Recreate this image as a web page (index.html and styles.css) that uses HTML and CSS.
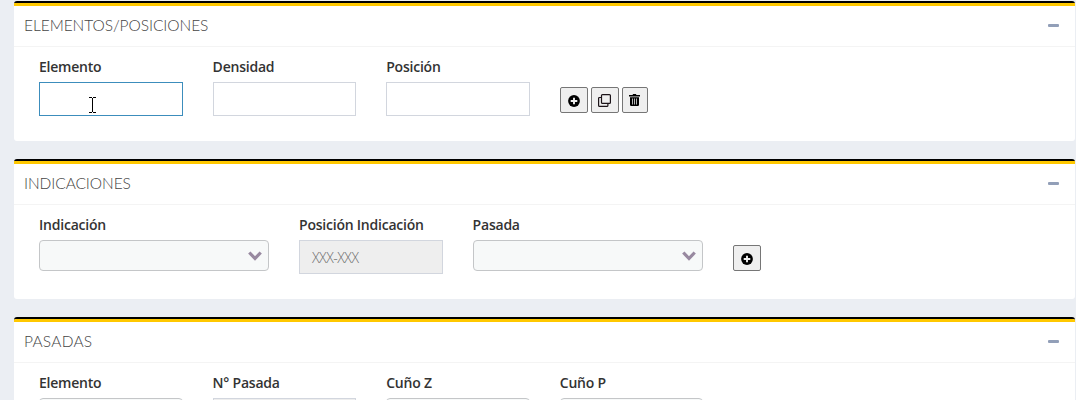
FILE: index.html
```html
<!DOCTYPE html>
<html lang="es">
<head>
<meta charset="utf-8">
<title>Elementos</title>
<link rel="stylesheet" href="styles.css">
</head>
<body>
<svg class="defs" aria-hidden="true">
  <symbol id="plus" viewBox="0 0 12 12"><circle cx="6" cy="6" r="5.9"/><path d="M6 2.7v6.6M2.7 6h6.6" fill="none" stroke="#efefef" stroke-width="1.9"/></symbol>
  <symbol id="chevron" viewBox="0 0 14 10"><path d="M1.300 1.500L7 7.500l5.700-6" fill="none" stroke="#9889a0" stroke-width="3.200"/></symbol>
</svg>
<main class="page">
  <section class="box">
    <header class="box-head"><h3 class="title title-elements">ELEMENTOS/POSICIONES</h3><span class="collapse"></span></header>
    <div class="row">
      <div class="field"><label class="label">Elemento</label><div class="input focused"></div></div>
      <div class="field"><label class="label">Densidad</label><div class="input"></div></div>
      <div class="field"><label class="label">Posición</label><div class="input"></div></div>
      <div class="actions">
        <button class="btn"><svg class="icon"><use href="#plus"/></svg></button>
        <button class="btn"><svg class="icon-copy" viewBox="0 0 13 13"><path d="M4.500.6h6.900q1 0 1 1v6.800q0 1-1 1H4.500q-1 0-1-1V1.600q0-1 1-1zM3.300 3.500H1.600q-1 0-1 1v6.900q0 1 1 1h7.300q1 0 1-1V9.500" fill="none" stroke="#1b1318" stroke-width="1.200"/></svg></button>
        <button class="btn btn-trash"><svg class="icon-trash" viewBox="0 0 11 12"><path d="M0 1h3.500l.6-1h2.800l.6 1H11v1.500H0zM1 3.300h9v7.500q0 1.200-1.200 1.200H2.200Q1 12 1 10.800z"/><path d="M3.500 4.500v6M5.500 4.500v6M7.500 4.500v6" stroke="#c9c9c9" stroke-width=".9"/></svg></button>
      </div>
    </div>
  </section>
  <section class="box">
    <header class="box-head"><h3 class="title title-indications">INDICACIONES</h3><span class="collapse"></span></header>
    <div class="row">
      <div class="field wide"><label class="label">Indicación</label><div class="select"><svg class="chevron"><use href="#chevron"/></svg></div></div>
      <div class="field"><label class="label">Posición Indicación</label><div class="input disabled"><span class="placeholder">XXX-XXX</span></div></div>
      <div class="field wide"><label class="label">Pasada</label><div class="select"><svg class="chevron"><use href="#chevron"/></svg></div></div>
      <div class="actions"><button class="btn"><svg class="icon"><use href="#plus"/></svg></button></div>
    </div>
  </section>
  <section class="box">
    <header class="box-head"><h3 class="title title-passes">PASADAS</h3><span class="collapse"></span></header>
    <div class="row">
      <div class="field"><label class="label">Elemento</label><div class="select"></div></div>
      <div class="field"><label class="label">N° Pasada</label><div class="input disabled"></div></div>
      <div class="field"><label class="label">Cuño Z</label><div class="select"></div></div>
      <div class="field"><label class="label">Cuño P</label><div class="select"></div></div>
    </div>
  </section>
</main>
<svg class="cursor" viewBox="0 0 7 16"><path d="M0 .5h3M4 .5h3M3.500 1v14M0 15.500h3M4 15.500h3" fill="none" stroke="#000"/></svg>
</body>
</html>
```
FILE: styles.css
```css
* { box-sizing: border-box; }
body {
  margin: 0;
  background: #ebeef3;
  font: 14px/20px "Open Sans", "Noto Sans", sans-serif;
  color: #333;
}
.defs { display: none; }
.page {
  display: flex;
  flex-direction: column;
  gap: 18px;
  height: 400px;
  overflow: hidden;
  padding: 1px 1px 0 14px;
}
.box {
  height: 140px;
  flex: none;
  background: #fff;
  border-top: 2px solid #000;
  border-radius: 3px;
}
.box:last-child {
  height: 83px;
  overflow: hidden;
  border-radius: 3px 3px 0 0;
}
.box-head {
  display: flex;
  justify-content: space-between;
  align-items: center;
  height: 44px;
  padding: 0 16px 0 10px;
  border-top: 3px solid #ffc800;
  border-bottom: 1px solid #f4f4f4;
}
.title {
  margin: 0;
  padding-bottom: 2px;
  font: 300 15.500px/20px Lato, sans-serif;
  color: #444;
  white-space: nowrap;
}
.title-elements { letter-spacing: -.06px; }
.title-indications { letter-spacing: -.08px; }
.title-passes { letter-spacing: .25px; }
.collapse {
  width: 11px;
  height: 3px;
  margin-top: -1px;
  border-radius: 1px;
  background: #929fb8;
}
.row {
  display: flex;
  gap: 30px;
  padding: 10px 25px 0;
}
.field { width: 143.600px; flex: none; }
.wide { width: 230px; }
.label {
  display: block;
  height: 25px;
  font-weight: 600;
  letter-spacing: -.22px;
  white-space: nowrap;
}
.input {
  height: 34px;
  padding: 7px 12px 5px;
  border: 1px solid #d2d6de;
  background: #fff;
}
.focused { border-color: #3c8dbc; }
.disabled { background: #eee; }
.placeholder {
  font-weight: 300;
  font-size: 14px;
  letter-spacing: -.45px;
  color: #6c6c6c;
}
.select {
  display: flex;
  justify-content: flex-end;
  align-items: center;
  height: 31px;
  padding-right: 6px;
  border: 1px solid #c4c6c8;
  border-radius: 4px;
  background: #f7f9f9;
}
.chevron { width: 14px; height: 10px; }
.actions {
  display: flex;
  gap: 3px;
  padding-top: 30px;
}
.btn {
  display: flex;
  justify-content: center;
  align-items: center;
  width: 28px;
  height: 26px;
  padding: 0;
  border: 1px solid #767676;
  border-radius: 2px;
  background: #efefef;
}
.btn-trash { width: 26px; }
.icon { width: 12px; height: 12px; margin-top: 1px; }
.icon-copy { width: 13px; height: 13px; }
.icon-trash { width: 11px; height: 12px; }
.cursor {
  position: absolute;
  left: 89px;
  top: 97px;
  width: 7px;
  height: 16px;
}
```
